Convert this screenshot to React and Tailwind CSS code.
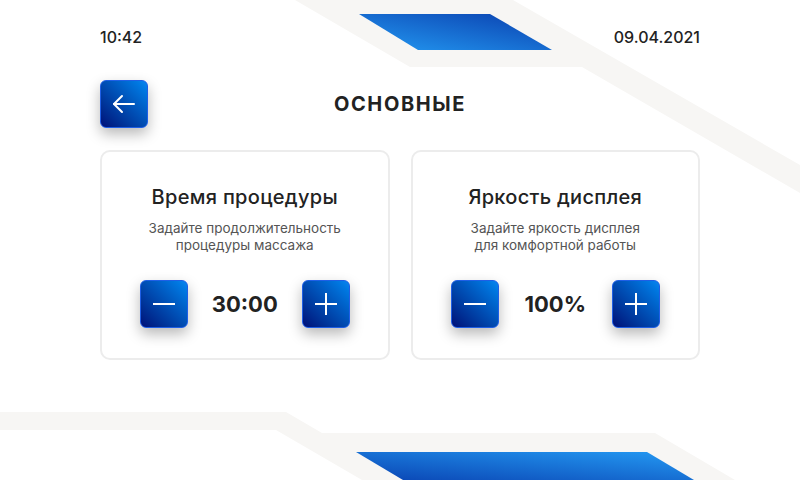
const FONT = { fontFamily: "Inter, 'Noto Sans', sans-serif" };

function Backdrop() {
  return (
    <svg className="absolute inset-0 pointer-events-none" width="800" height="480" viewBox="0 0 800 480">
      <defs>
        <linearGradient id="topBlue" x1="0" y1="1" x2="1" y2="0">
          <stop offset="0" stopColor="#2399f2" />
          <stop offset="1" stopColor="#0a3fae" />
        </linearGradient>
        <linearGradient id="botBlue" x1="0" y1="1" x2="1" y2="0">
          <stop offset="0" stopColor="#0a45b4" />
          <stop offset="1" stopColor="#249af3" />
        </linearGradient>
      </defs>
      <polygon points="295,0 513,0 800,165 800,193 582,67 410,67" fill="#f7f6f4" />
      <polygon points="359,14 490,14 552,50 418,50" fill="url(#topBlue)" />
      <polygon points="0,412 286,412 322,433 655,433 735,480 362,480 276,430 0,430" fill="#f7f6f4" />
      <polygon points="356,452 647,452 694,480 403,480" fill="url(#botBlue)" />
    </svg>
  );
}

function BlueButton({ children }) {
  return (
    <button className="w-12 h-12 rounded-md border border-[#1f5fe6] bg-gradient-to-tr from-[#000e78] to-[#0b86f0] shadow-[0_6px_14px_rgba(0,0,0,0.28)] flex items-center justify-center text-white">
      {children}
    </button>
  );
}

function Minus() {
  return (
    <svg width="24" height="24" viewBox="0 0 24 24" fill="none" stroke="currentColor" strokeWidth="2">
      <line x1="1" y1="12" x2="23" y2="12" />
    </svg>
  );
}

function Plus() {
  return (
    <svg width="24" height="24" viewBox="0 0 24 24" fill="none" stroke="currentColor" strokeWidth="2">
      <line x1="1" y1="12" x2="23" y2="12" />
      <line x1="12" y1="1" x2="12" y2="23" />
    </svg>
  );
}

function Card({ title, lines, value }) {
  return (
    <div className="flex-1 h-[210px] rounded-[10px] border-2 border-[#ececec] bg-white flex flex-col items-center pt-[33px]">
      <h2 className="text-[20px] leading-6 font-medium text-[#222] tracking-[0.3px]">{title}</h2>
      <p className="mt-[11px] text-[13.5px] leading-[17px] text-[#555] text-center">
        {lines[0]}
        <br />
        {lines[1]}
      </p>
      <div className="mt-[26px] w-full flex items-center justify-between px-[38px]">
        <BlueButton>
          <Minus />
        </BlueButton>
        <span className="text-[22px] font-bold text-[#222]">{value}</span>
        <BlueButton>
          <Plus />
        </BlueButton>
      </div>
    </div>
  );
}

export default function App() {
  return (
    <div className="relative w-[800px] h-[480px] overflow-hidden bg-white" style={FONT}>
      <Backdrop />
      <div className="relative px-[100px]">
        <div className="h-[74px] flex items-center justify-between text-[16px] font-medium text-[#222]">
          <span>10:42</span>
          <span>09.04.2021</span>
        </div>
        <div className="relative h-12 mt-[6px] flex items-center justify-center">
          <div className="absolute left-0 top-0">
            <BlueButton>
              <svg width="24" height="24" viewBox="0 0 24 24" fill="none" stroke="currentColor" strokeWidth="2" strokeLinecap="round" strokeLinejoin="round">
                <line x1="22" y1="12" x2="2" y2="12" />
                <polyline points="10 4 2 12 10 20" />
              </svg>
            </BlueButton>
          </div>
          <h1 className="text-[20px] font-bold text-[#222] tracking-[1.6px]">ОСНОВНЫЕ</h1>
        </div>
        <div className="mt-[22px] flex gap-[21px]">
          <Card title="Время процедуры" lines={["Задайте продолжительность", "процедуры массажа"]} value="30:00" />
          <Card title="Яркость дисплея" lines={["Задайте яркость дисплея", "для комфортной работы"]} value="100%" />
        </div>
      </div>
    </div>
  );
}
